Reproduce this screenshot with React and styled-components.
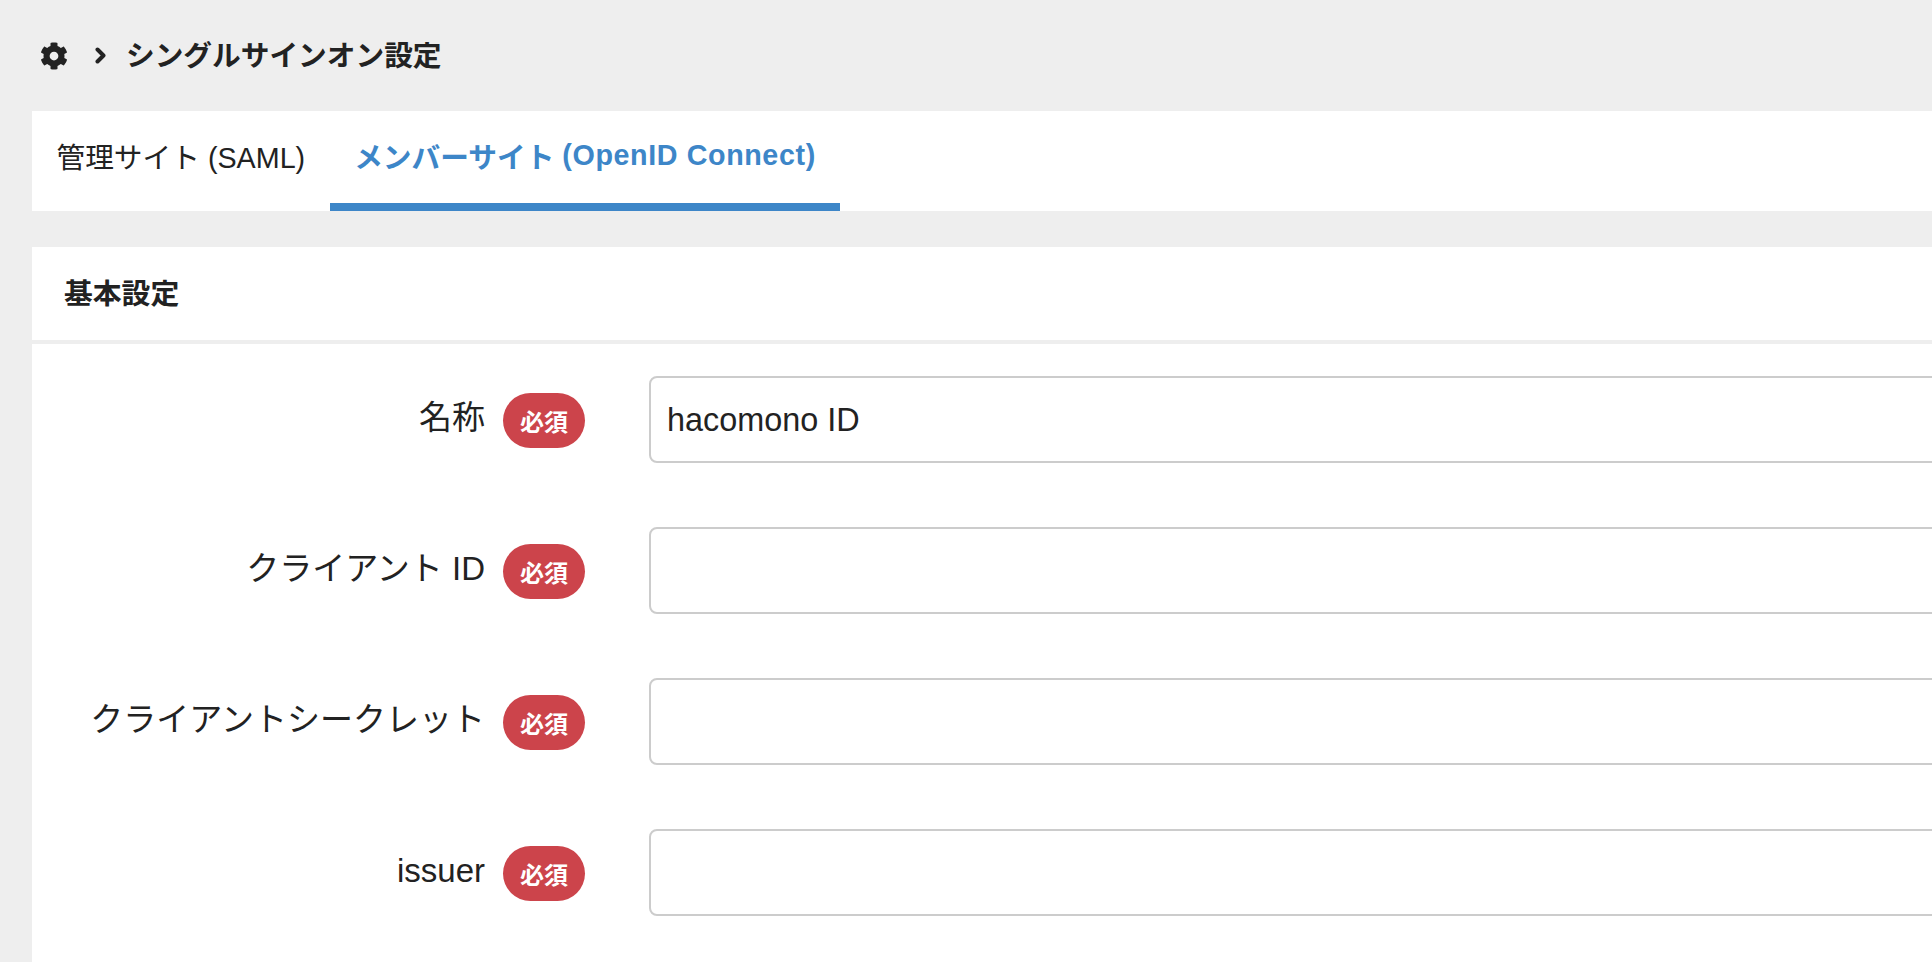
import React from "react";
import styled, { createGlobalStyle } from "styled-components";
import { FaCog } from "react-icons/fa";

const fields = [
  { label: "名称", value: "hacomono ID" },
  { label: "クライアント ID", value: "" },
  { label: "クライアントシークレット", value: "" },
  { label: "issuer", value: "" },
];

const App = () => {
  return (
    <>
      <GlobalStyle />
      <Page>
        <Breadcrumb>
          <GearIcon />
          <Chevron viewBox="0 0 11 17">
            <path d="M2.5 2.5l6 6-6 6" />
          </Chevron>
          <PageTitle>シングルサインオン設定</PageTitle>
        </Breadcrumb>
        <Tabs>
          <Tab>管理サイト (SAML)</Tab>
          <Tab $active>
            メンバーサイト <TabLatin>(OpenID Connect)</TabLatin>
          </Tab>
        </Tabs>
        <Panel>
          <PanelHeader>基本設定</PanelHeader>
          <PanelBody>
            {fields.map((field) => (
              <FormRow key={field.label}>
                <LabelCell>
                  <FieldLabel>{field.label}</FieldLabel>
                  <RequiredBadge>必須</RequiredBadge>
                </LabelCell>
                <TextInput type="text" defaultValue={field.value} />
              </FormRow>
            ))}
          </PanelBody>
        </Panel>
      </Page>
    </>
  );
};

const GlobalStyle = createGlobalStyle`
  html, body {
    margin: 0;
    padding: 0;
    height: 100%;
    overflow: hidden;
    background: #eeeeee;
  }
  body {
    font-family: "Liberation Sans", "Noto Sans CJK JP", sans-serif;
    color: #222222;
  }
`;

const Page = styled.div`
  height: 962px;
  overflow: hidden;
  padding-left: 32px;
  display: flex;
  flex-direction: column;
`;

const Breadcrumb = styled.div`
  height: 111px;
  flex: none;
  display: flex;
  align-items: center;
  padding-left: 8px;
`;

const GearIcon = styled(FaCog)`
  width: 28px;
  height: 28px;
  color: #222222;
  margin-right: 27px;
`;

const Chevron = styled.svg`
  width: 11px;
  height: 17px;
  margin-right: 20px;
  fill: none;
  stroke: #222222;
  stroke-width: 4;
  stroke-linecap: round;
  stroke-linejoin: round;
`;

const PageTitle = styled.h1`
  margin: 0;
  padding-top: 1px;
  font-size: 28.7px;
  line-height: 40px;
  font-weight: 700;
`;

const Tabs = styled.div`
  height: 100px;
  flex: none;
  display: flex;
  background: #ffffff;
`;

const Tab = styled.div`
  height: 100%;
  box-sizing: border-box;
  padding: 4px 24.5px 8px;
  display: flex;
  align-items: center;
  white-space: pre;
  font-size: 28.7px;
  font-weight: ${(props) => (props.$active ? 700 : 400)};
  color: ${(props) => (props.$active ? "#3d86c8" : "#222222")};
  border-bottom: 8px solid ${(props) => (props.$active ? "#3d86c8" : "transparent")};
`;

const TabLatin = styled.span`
  letter-spacing: 0.6px;
`;

const Panel = styled.section`
  margin-top: 36px;
  flex: 1;
  overflow: hidden;
`;

const PanelHeader = styled.h2`
  margin: 0 0 4px;
  height: 93px;
  box-sizing: border-box;
  padding: 0 0 5px 32px;
  display: flex;
  align-items: center;
  background: #ffffff;
  font-size: 28.8px;
  font-weight: 700;
`;

const PanelBody = styled.div`
  background: #ffffff;
  height: 100%;
  padding-top: 32px;
  display: flex;
  flex-direction: column;
  gap: 64px;
`;

const FormRow = styled.div`
  display: flex;
  align-items: center;
`;

const LabelCell = styled.div`
  width: 553px;
  flex: none;
  display: flex;
  align-items: center;
  justify-content: flex-end;
  gap: 18px;
  margin-right: 64px;
`;

const FieldLabel = styled.label`
  font-size: 33px;
  line-height: 44px;
  padding-bottom: 3px;
  color: #222222;
  white-space: nowrap;
`;

const RequiredBadge = styled.span`
  width: 82px;
  height: 55px;
  flex: none;
  box-sizing: border-box;
  margin-top: 2px;
  padding-bottom: 1px;
  border-radius: 28px;
  background: #cc444b;
  color: #ffffff;
  font-size: 24px;
  font-weight: 700;
  display: flex;
  align-items: center;
  justify-content: center;
`;

const TextInput = styled.input`
  width: 1400px;
  height: 87px;
  flex: none;
  box-sizing: border-box;
  padding: 2px 16px 0;
  border: 2px solid #cccccc;
  border-radius: 8px;
  background: #ffffff;
  font-family: "Liberation Sans", "Noto Sans CJK JP", sans-serif;
  font-size: 32.4px;
  color: #222222;
  outline: none;
`;

export default App;
